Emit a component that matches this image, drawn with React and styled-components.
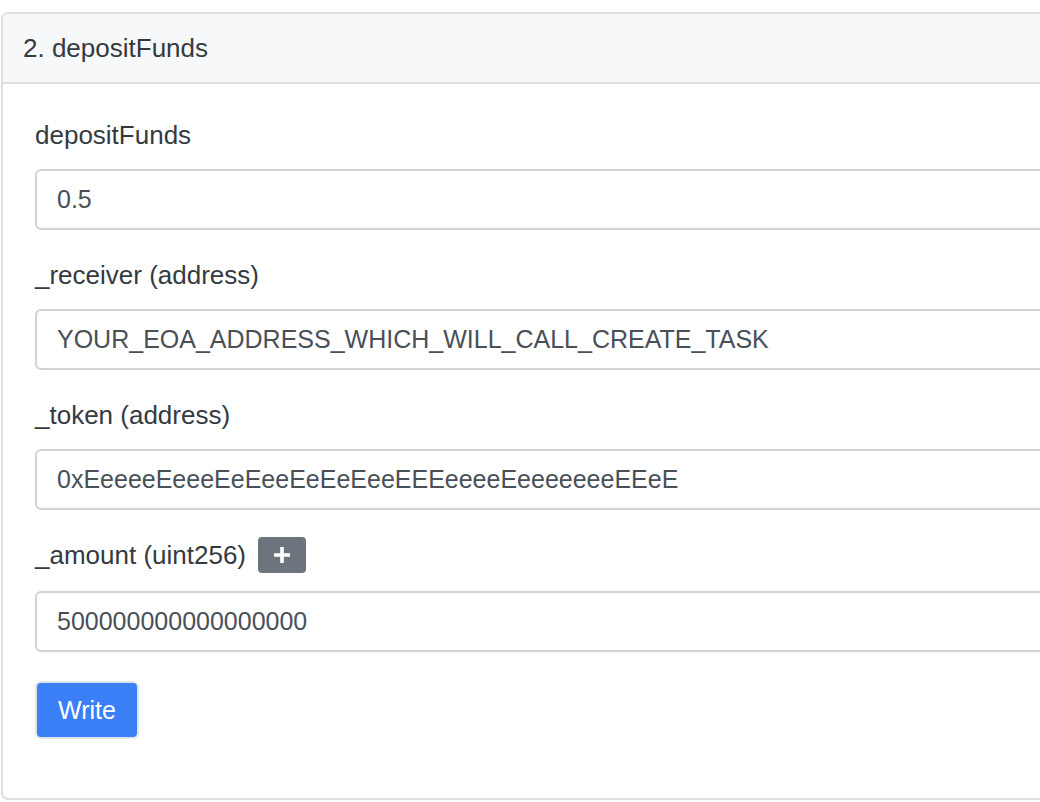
import React, { useState } from 'react';
import styled, { createGlobalStyle } from 'styled-components';

const GlobalStyle = createGlobalStyle`
    html, body {
        margin: 0;
        padding: 0;
        background: #ffffff;
        overflow: hidden;
    }
    body {
        font-family: "Helvetica Neue", "Liberation Sans", Arial, sans-serif;
        color: #343a40;
    }
`;

const Page = styled.div`
    padding: 12px 0 0 1px;
    width: 1040px;
    height: 802px;
    box-sizing: border-box;
    overflow: hidden;
`;

const Card = styled.div`
    width: 1080px;
    border: 2px solid #dfdfdf;
    border-radius: 7px;
    background: #fff;
    box-sizing: border-box;
    overflow: hidden;
`;

const CardHeader = styled.div`
    background: #f7f8f9;
    border-bottom: 2px solid #dfdfdf;
    padding: 15px 20px 14px;
    font-size: 26px;
    line-height: 39px;
    color: #343a40;
`;

const CardBody = styled.div`
    padding: 33px 32px 59px;
`;

const Group = styled.div`
    margin-bottom: 27px;
`;

const LabelRow = styled.div`
    display: flex;
    align-items: center;
    gap: 12px;
    height: 36px;
    margin-bottom: ${(p) => (p.$tall ? '18px' : '16px')};
`;

const Label = styled.label`
    font-size: 26px;
    line-height: 36px;
    color: #343a40;
`;

const AddButton = styled.button`
    width: 48px;
    height: 36px;
    padding: 0;
    border: none;
    border-radius: 4px;
    background: #6c757d;
    display: flex;
    align-items: center;
    justify-content: center;
    cursor: pointer;
`;

const Input = styled.input`
    display: block;
    width: 100%;
    height: 61px;
    box-sizing: border-box;
    padding: 0 20px;
    border: 2px solid #ced4da;
    border-radius: 6px;
    background: #fff;
    font-family: inherit;
    font-size: 25px;
    color: #495057;

    &:focus {
        outline: none;
    }
`;

const WriteButton = styled.button`
    margin-top: 2px;
    height: 58px;
    padding: 0 21px;
    border: 2px solid #dfe3ea;
    border-radius: 6px;
    background: #3a7ff6;
    color: #fff;
    font-family: inherit;
    font-size: 25px;
    cursor: pointer;
`;

const fields = [
    { label: 'depositFunds', value: '0.5' },
    { label: '_receiver (address)', value: 'YOUR_EOA_ADDRESS_WHICH_WILL_CALL_CREATE_TASK' },
    { label: '_token (address)', value: '0xEeeeeEeeeEeEeeEeEeEeeEEEeeeeEeeeeeeeEEeE' },
    { label: '_amount (uint256)', value: '500000000000000000', add: true },
];

const PlusIcon = () => (
    <svg width="20" height="20" viewBox="0 0 20 20">
        <path d="M10 2v16M2 10h16" stroke="#fff" strokeWidth="3.6" />
    </svg>
);

const App = () => {
    const [values, setValues] = useState(fields.map((f) => f.value));

    return (
        <Page>
            <GlobalStyle />
            <Card>
                <CardHeader>2. depositFunds</CardHeader>
                <CardBody>
                    {fields.map((f, i) => (
                        <Group key={f.label}>
                            <LabelRow $tall={f.add}>
                                <Label>{f.label}</Label>
                                {f.add && (
                                    <AddButton>
                                        <PlusIcon />
                                    </AddButton>
                                )}
                            </LabelRow>
                            <Input
                                type="text"
                                value={values[i]}
                                onChange={(e) => {
                                    const next = [...values];
                                    next[i] = e.target.value;
                                    setValues(next);
                                }}
                            />
                        </Group>
                    ))}
                    <WriteButton>Write</WriteButton>
                </CardBody>
            </Card>
        </Page>
    );
};

export default App;
